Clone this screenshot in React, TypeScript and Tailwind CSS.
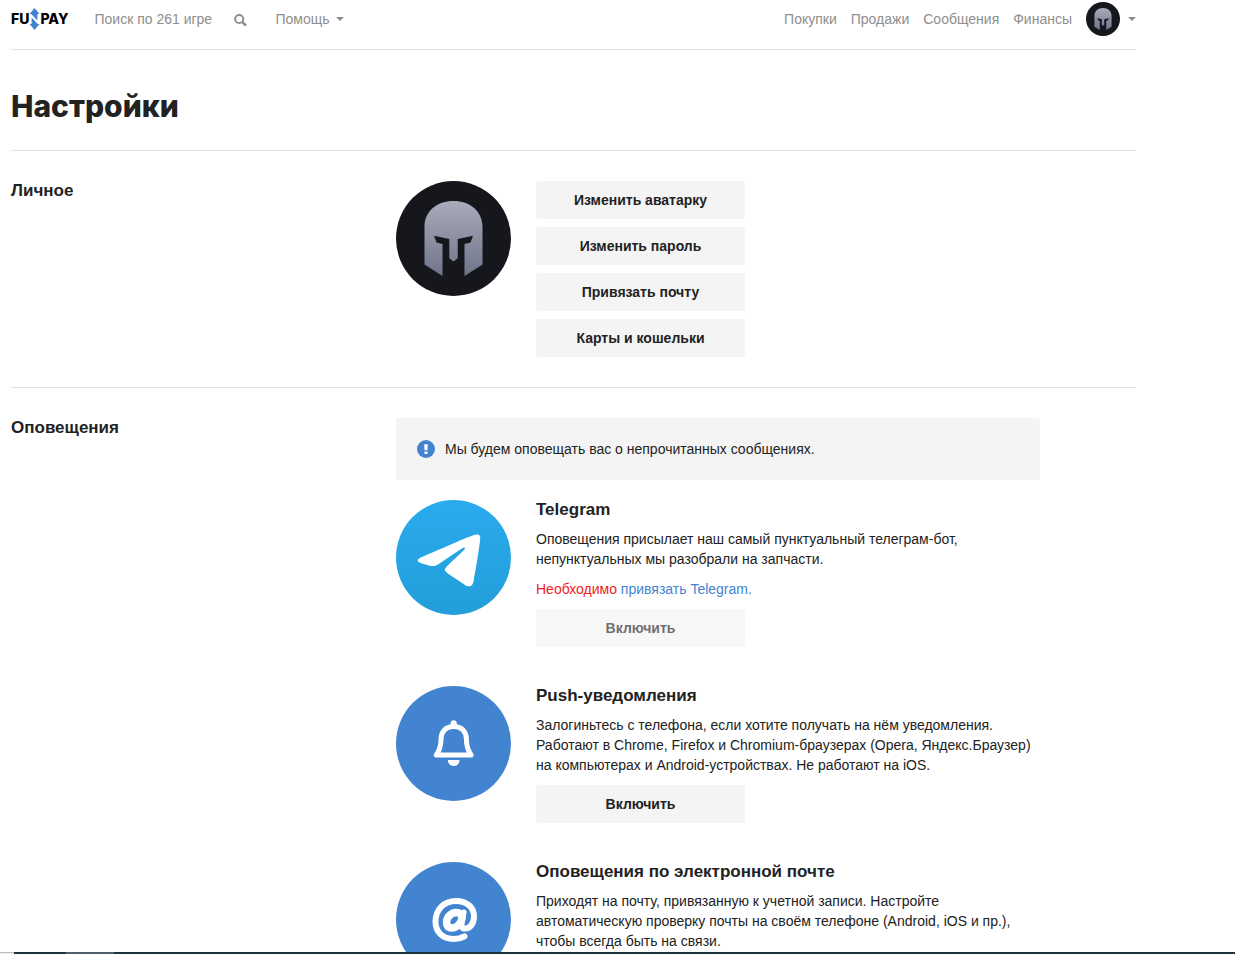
import React from "react";

const BODY = "font-['Liberation_Sans',Arial,sans-serif]";

function Helmet({ id, className }: { id: string; className: string }) {
  return (
    <svg viewBox="0 0 115 115" className={className} role="img" aria-label="Аватар">
      <defs>
        <linearGradient id={id} x1="0" y1="0" x2="0" y2="1">
          <stop offset="0" stopColor="#a9acba" />
          <stop offset="1" stopColor="#70748a" />
        </linearGradient>
      </defs>
      <circle cx="57.5" cy="57.5" r="57.5" fill="#16171d" />
      <path
        fill={`url(#${id})`}
        d="M28.5 83.5V46C28.5 30 41 20 57.5 20S86.5 30 86.5 46V83.5L68.5 95V63L74.5 61.5L77 54.7L61.7 58V77.3L57.5 80.5L53.3 77.3V58L38 54.7L40.5 61.5L46.5 63V95Z"
      />
    </svg>
  );
}

function TelegramIcon() {
  return (
    <svg viewBox="0 0 240 240" className="size-[115px] shrink-0" aria-hidden="true">
      <defs>
        <linearGradient id="tg" x1="0" y1="0" x2="0" y2="1">
          <stop offset="0" stopColor="#2aabee" />
          <stop offset="1" stopColor="#229ed9" />
        </linearGradient>
      </defs>
      <circle cx="120" cy="120" r="120" fill="url(#tg)" />
      <path
        fill="#fff"
        d="M54.3 118.8c35-15.2 58.3-25.3 70-30.2 33.3-13.9 40.3-16.3 44.8-16.4 1 0 3.2.2 4.7 1.4 1.2 1 1.5 2.3 1.7 3.3s.4 3.1.2 4.7c-1.8 19-9.6 65.1-13.6 86.3-1.7 9-5 12-8.2 12.3-7 .6-12.3-4.6-19-9-10.6-6.9-16.5-11.2-26.8-18-11.9-7.8-4.2-12.1 2.6-19.1 1.8-1.8 32.5-29.8 33.1-32.3.1-.3.1-1.5-.6-2.1-.7-.6-1.7-.4-2.5-.2-1.1.2-17.9 11.4-50.6 33.5-4.8 3.3-9.1 4.9-13 4.8-4.3-.1-12.5-2.4-18.7-4.4-7.5-2.4-13.5-3.7-13-7.9.3-2.2 3.3-4.4 8.9-6.7z"
      />
    </svg>
  );
}

function BellIcon() {
  return (
    <svg viewBox="0 0 115 115" className="size-[115px] shrink-0" aria-hidden="true">
      <circle cx="57.5" cy="57.5" r="57.5" fill="#4384d1" />
      <circle cx="57.7" cy="37.2" r="3" fill="#fff" />
      <path
        d="M57.7 40.5C49 40.5 45 46.5 45 53C45 63 42.5 65 40.3 69H75.1C72.9 65 70.4 63 70.4 53C70.4 46.5 66.4 40.5 57.7 40.5Z"
        fill="none"
        stroke="#fff"
        strokeWidth="5"
        strokeLinejoin="round"
      />
      <path d="M51.9 74H63.5C63.5 77.5 61 80 57.7 80S51.9 77.5 51.9 74Z" fill="#fff" />
    </svg>
  );
}

function AtIcon() {
  return (
    <svg viewBox="0 0 115 115" className="size-[115px] shrink-0" aria-hidden="true">
      <circle cx="57.5" cy="57.5" r="57.5" fill="#4384d1" />
      <g fill="none" stroke="#fff" strokeLinecap="round" strokeLinejoin="round">
        <path
          d="M68.5 74.3C65.5 76 62 77 57.8 77C46.5 77 39.5 70 39.5 59.5C39.5 47.5 48 39 60 39C71 39 78 45.5 78 54.5C78 61.5 74 66.5 69.3 66.5C66 66.5 65 64.5 65.6 61L67.6 50.5"
          strokeWidth="6"
        />
        <path
          d="M66 56C66 52 63.5 50.6 60.3 50.6C54.8 50.6 50.5 55.5 50.5 60.6C50.5 64.3 52.6 66 55.8 66C61.2 66 65.3 61.3 66 56Z"
          strokeWidth="7.5"
        />
      </g>
    </svg>
  );
}

function Logo() {
  return (
    <a
      href="#"
      aria-label="FUNPAY"
      className="flex items-center font-['Inter',sans-serif] text-sm leading-5 font-extrabold text-black"
    >
      <span>FU</span>
      <svg viewBox="0 0 11 22" className="h-[22px] w-[11px]" aria-hidden="true">
        <path fill="#4384d1" d="M5.5 0L10.5 6H8.4V12.6L2.2 6H0.5Z" />
        <path fill="#4384d1" d="M5.5 22L0.5 16H2.6V9.4L8.8 16H10.5Z" />
      </svg>
      <span>PAY</span>
    </a>
  );
}

function Caret() {
  return (
    <svg viewBox="0 0 8 4" className="h-1 w-2" aria-hidden="true">
      <path d="M0 0H8L4 4Z" fill="#8e8e8e" />
    </svg>
  );
}

function GreyButton({ children, disabled = false }: { children: string; disabled?: boolean }) {
  return (
    <button
      type="button"
      disabled={disabled}
      className="h-[38px] w-[209px] rounded-[3px] bg-[#f4f4f4] text-sm font-bold text-[#222] disabled:opacity-65"
    >
      {children}
    </button>
  );
}

function Section({ title, children }: { title: string; children: React.ReactNode }) {
  return (
    <section className="flex border-t border-[#e3e3e3] py-[30px]">
      <h2 className="w-[385px] shrink-0 text-[17px] leading-5 font-bold">{title}</h2>
      {children}
    </section>
  );
}

function Channel({
  icon,
  title,
  disabled,
  children,
}: {
  icon: React.ReactNode;
  title: string;
  disabled?: boolean;
  children: React.ReactNode;
}) {
  return (
    <div className="flex items-start gap-[25px]">
      {icon}
      <div className="min-w-0 flex-1">
        <h3 className="mb-[9px] text-[17px] leading-5 font-bold">{title}</h3>
        <div className="flex flex-col items-start gap-[10px]">
          {children}
          <GreyButton disabled={disabled}>Включить</GreyButton>
        </div>
      </div>
    </div>
  );
}

export default function App() {
  return (
    <div className={`flex h-screen flex-col overflow-hidden bg-white text-sm leading-5 text-[#222] ${BODY}`}>
      <div className="min-h-0 flex-1 overflow-hidden pr-[99px] pl-[11px]">
        <header className="flex h-[49px] items-start justify-between text-[#8e8e8e]">
          <div className="flex h-[38px] items-center">
            <Logo />
            <form role="search" className="ml-[26px] flex items-center">
              <input
                type="text"
                aria-label="Поиск по играм"
                placeholder="Поиск по 261 игре"
                className="w-[140px] leading-5 placeholder:text-[#8e8e8e]"
              />
              <button type="submit" aria-label="Искать">
                <svg viewBox="0 0 13 13" className="size-[13px]" fill="none" stroke="#8e8e8e" aria-hidden="true">
                  <circle cx="5.2" cy="6" r="4.1" strokeWidth="2" />
                  <path d="M8.4 9.2L11.4 12" strokeWidth="2.4" strokeLinecap="round" />
                </svg>
              </button>
            </form>
            <a href="#" className="ml-[28px] flex items-center gap-[6px]">
              Помощь
              <Caret />
            </a>
          </div>
          <nav className="flex h-[38px] items-center gap-[14px]">
            <a href="#">Покупки</a>
            <a href="#">Продажи</a>
            <a href="#">Сообщения</a>
            <a href="#">Финансы</a>
            <a href="#" aria-label="Профиль" className="flex items-center gap-2">
              <Helmet id="helmet-small" className="size-[34px]" />
              <Caret />
            </a>
          </nav>
        </header>

        <main>
          <h1 className="border-t border-[#e3e3e3] pt-[36px] pb-[24px] font-['Inter',sans-serif] text-[30px] leading-10 font-extrabold">
            Настройки
          </h1>

          <Section title="Личное">
            <div className="flex items-start gap-[25px]">
              <Helmet id="helmet-large" className="size-[115px] shrink-0" />
              <div className="flex flex-col gap-2">
                <GreyButton>Изменить аватарку</GreyButton>
                <GreyButton>Изменить пароль</GreyButton>
                <GreyButton>Привязать почту</GreyButton>
                <GreyButton>Карты и кошельки</GreyButton>
              </div>
            </div>
          </Section>

          <Section title="Оповещения">
            <div className="w-[644px]">
              <div className="mb-5 flex h-[62px] items-center gap-[10px] rounded-[3px] bg-[#f4f4f4] px-[21px]">
                <svg viewBox="0 0 18 18" className="size-[18px]" aria-hidden="true">
                  <circle cx="9" cy="9" r="9" fill="#4384d1" />
                  <path d="M7.2 4.2H10.8L10.4 10.2H7.6ZM7.5 11.4H10.5V14H7.5Z" fill="#fff" />
                </svg>
                <p>Мы будем оповещать вас о непрочитанных сообщениях.</p>
              </div>
              <div className="flex flex-col gap-[39px]">
                <Channel icon={<TelegramIcon />} title="Telegram" disabled>
                  <p>
                    Оповещения присылает наш самый пунктуальный телеграм-бот,
                    <br />
                    непунктуальных мы разобрали на запчасти.
                  </p>
                  <p className="text-[#f01d1d]">
                    Необходимо{" "}
                    <a href="#" className="text-[#4384d1]">
                      привязать Telegram.
                    </a>
                  </p>
                </Channel>
                <Channel icon={<BellIcon />} title="Push-уведомления">
                  <p>
                    Залогиньтесь с телефона, если хотите получать на нём уведомления.
                    <br />
                    Работают в Chrome, Firefox и Chromium-браузерах (Opera, Яндекс.Браузер)
                    <br />
                    на компьютерах и Android-устройствах. Не работают на iOS.
                  </p>
                </Channel>
                <Channel icon={<AtIcon />} title="Оповещения по электронной почте">
                  <p>
                    Приходят на почту, привязанную к учетной записи. Настройте
                    <br />
                    автоматическую проверку почты на своём телефоне (Android, iOS и пр.),
                    <br />
                    чтобы всегда быть на связи.
                  </p>
                </Channel>
              </div>
            </div>
          </Section>
        </main>
      </div>
      <footer className="flex h-[2px] shrink-0">
        <div className="w-[14px] border-t border-[#bdbdbd] bg-[#eee]" />
        <div className="w-[52px] bg-[#1f333f]" />
        <div className="w-[48px] bg-[#4f6069]" />
        <div className="flex-1 bg-[#1f333f]" />
      </footer>
    </div>
  );
}
